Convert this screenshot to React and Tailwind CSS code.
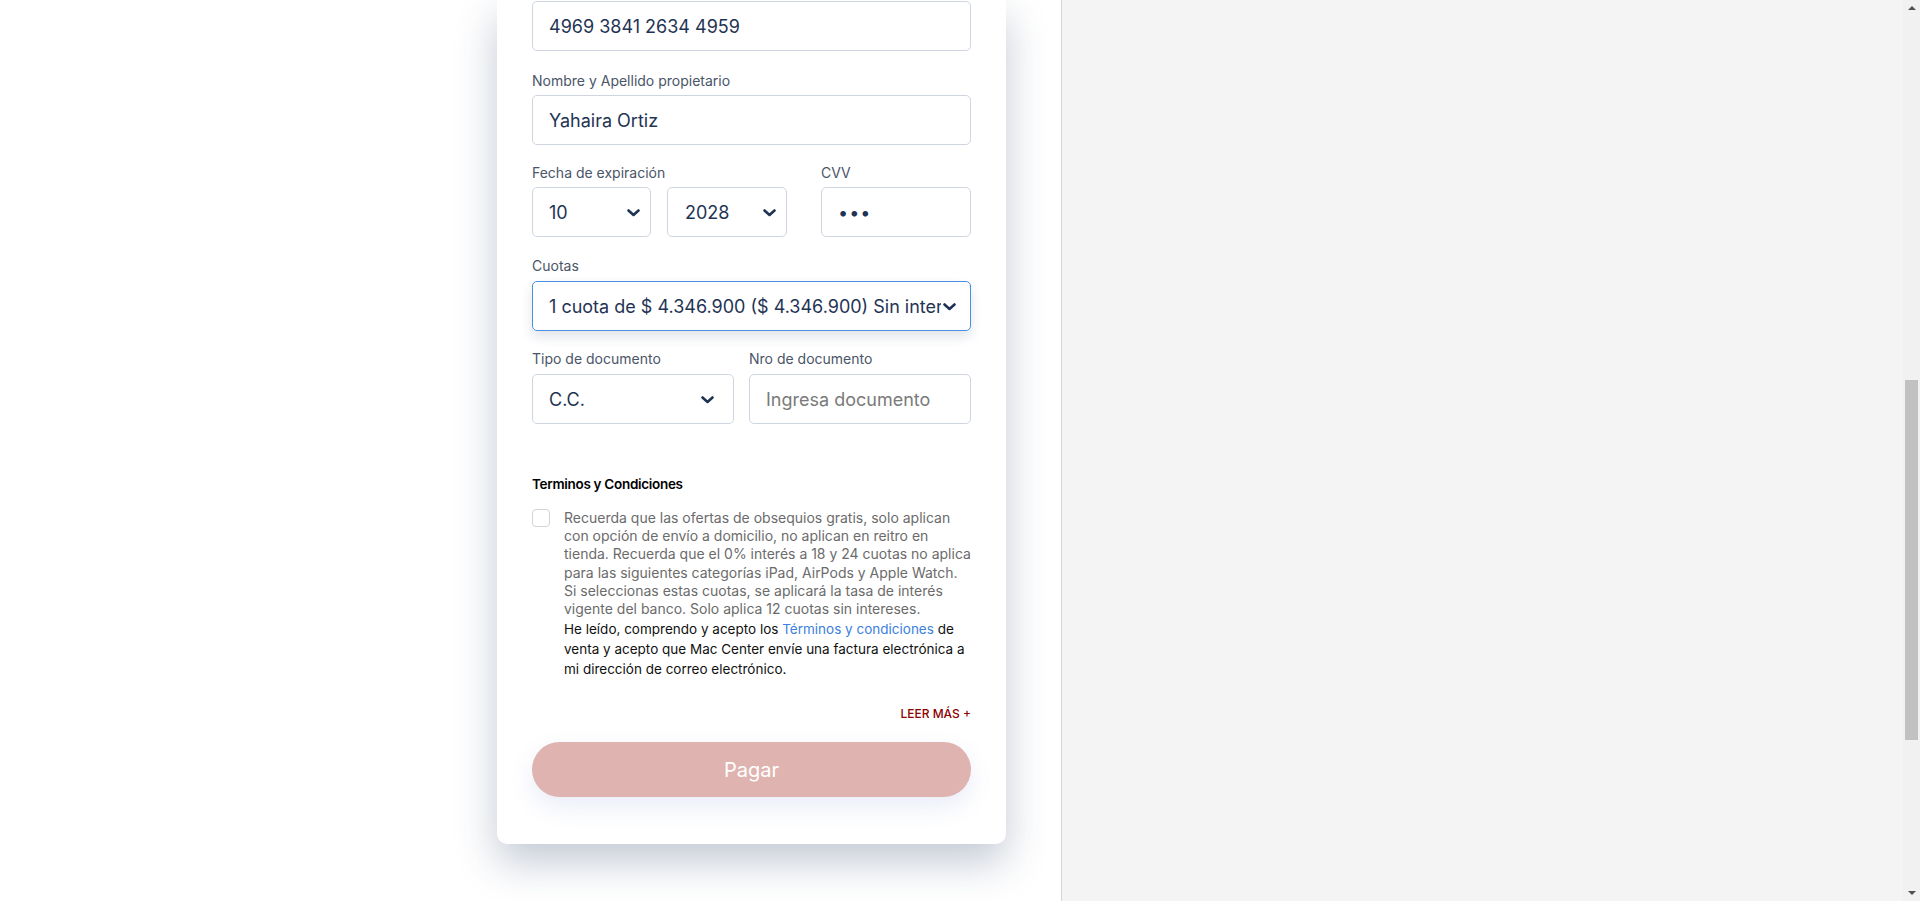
import React from "react";

const Chevron = ({ className = "" }) => (
  <svg className={className} width="13" height="8" viewBox="0 0 13 8" fill="none">
    <polyline points="1.5,1.5 6.5,6 11.5,1.5" stroke="#1e3354" strokeWidth="2.6" strokeLinecap="round" strokeLinejoin="round" />
  </svg>
);

const Label = ({ children, mb = "mb-[6px]" }) => (
  <div className={"text-[14px] leading-[16px] text-[#4a5568] " + mb}>{children}</div>
);

const boxBase =
  "relative h-[50px] rounded-[5px] border border-[#cfd6e1] bg-white flex items-center text-[18px] text-[#1f3454]";

export default function App() {
  return (
    <div
      className="flex h-[901px] w-[1920px] overflow-hidden bg-white"
      style={{ fontFamily: "Inter, 'Noto Sans', sans-serif" }}
    >
      {/* left column */}
      <div className="w-[1061px] shrink-0 bg-white pl-[497px]">
        <div className="w-[509px] bg-white rounded-b-[10px] shadow-[0_18px_40px_rgba(40,60,100,0.28)] px-[35px] pt-[1px] pb-[47px]">
          {/* card number */}
          <div className={boxBase + " pl-[16px]"}>4969 3841 2634 4959</div>

          {/* name */}
          <div className="mt-[22px]">
            <Label>Nombre y Apellido propietario</Label>
            <div className={boxBase + " pl-[16px]"}>Yahaira Ortiz</div>
          </div>

          {/* expiration + cvv */}
          <div className="mt-[20px] flex">
            <div className="w-[289px]">
              <Label>Fecha de expiración</Label>
              <div className="flex gap-[16px]">
                <div className={boxBase + " w-[119px] pl-[16px]"}>
                  10
                  <Chevron className="absolute right-[10px] top-[21px]" />
                </div>
                <div className={boxBase + " w-[120px] pl-[17px]"}>
                  2028
                  <Chevron className="absolute right-[10px] top-[21px]" />
                </div>
              </div>
            </div>
            <div className="flex-1">
              <Label>CVV</Label>
              <div className={boxBase + " pl-[16px] text-[14px] tracking-[1px]"}>•••</div>
            </div>
          </div>

          {/* cuotas */}
          <div className="mt-[21px]">
            <Label mb="mb-[7px]">Cuotas</Label>
            <div className="relative h-[50px] rounded-[5px] border border-[#4a90e2] bg-white flex items-center text-[18px] text-[#1f3454] shadow-[0_6px_12px_rgba(30,50,90,0.13)]">
              <div className="ml-[16px] mr-[29px] overflow-hidden whitespace-nowrap">
                1 cuota de $ 4.346.900 ($ 4.346.900) Sin intereses
              </div>
              <Chevron className="absolute right-[14px] top-[21px]" />
            </div>
          </div>

          {/* document */}
          <div className="mt-[20px] flex gap-[15px]">
            <div className="w-[202px]">
              <Label mb="mb-[7px]">Tipo de documento</Label>
              <div className={boxBase + " pl-[16px] border-[#b9c8dc]"}>
                C.C.
                <Chevron className="absolute right-[19px] top-[21px]" />
              </div>
            </div>
            <div className="flex-1">
              <Label mb="mb-[7px]">Nro de documento</Label>
              <div className={boxBase + " pl-[16px] text-[#7a7a7a]"}>Ingresa documento</div>
            </div>
          </div>

          {/* terms */}
          <div className="mt-[51px] text-[13.5px] leading-[18px] font-semibold tracking-[-0.3px] text-black">
            Terminos y Condiciones
          </div>
          <div className="mt-[16px] flex gap-[14px]">
            <div className="h-[18px] w-[18px] shrink-0 rounded-[4px] border border-[#d3d3d3] bg-white" />
            <div className="w-[407px]">
              <p className="text-[14px] leading-[18.2px] text-[#6b6b6b]">
                Recuerda que las ofertas de obsequios gratis, solo aplican con opción de envío a domicilio, no aplican en reitro en tienda. Recuerda que el 0% interés a 18 y 24 cuotas no aplica para las siguientes categorías iPad, AirPods y Apple Watch. Si seleccionas estas cuotas, se aplicará la tasa de interés vigente del banco. Solo aplica 12 cuotas sin intereses.
              </p>
              <p className="mt-[1px] text-[13.5px] leading-[20px] text-[#111111]">
                He leído, comprendo y acepto los{" "}
                <span className="text-[#3b7fe0]">Términos y condiciones</span> de venta y acepto que Mac Center envíe una factura electrónica a mi dirección de correo electrónico.
              </p>
            </div>
          </div>

          <div className="mt-[28px] flex justify-end text-[12px] leading-[14px] font-medium text-[#8b0000]">
            LEER MÁS +
          </div>

          <button className="mt-[21px] h-[55px] w-full rounded-full bg-[#dfb4b0] text-[20px] text-white shadow-[0_10px_25px_rgba(80,110,200,0.12)]">
            Pagar
          </button>
        </div>
      </div>

      {/* right panel */}
      <div className="flex-1 bg-[#f4f4f4] border-l border-[#d6d6d6]" />

      {/* scrollbar */}
      <div className="relative w-[17px] shrink-0 bg-[#f1f1f1]">
        <div className="absolute left-[5px] top-[6px] h-0 w-0 border-x-[4px] border-b-[4px] border-x-transparent border-b-[#505050]" />
        <div className="absolute left-[2px] top-[380px] h-[360px] w-[13px] bg-[#c1c1c1]" />
        <div className="absolute left-[5px] bottom-[6px] h-0 w-0 border-x-[4px] border-t-[4px] border-x-transparent border-t-[#505050]" />
      </div>
    </div>
  );
}
